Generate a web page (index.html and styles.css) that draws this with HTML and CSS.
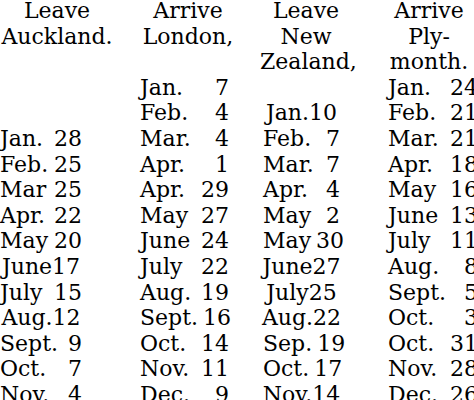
FILE: index.html
```html
<!DOCTYPE html>
<html lang="en">
<head>
<meta charset="utf-8">
<title>Mail timetable</title>
<link rel="stylesheet" href="styles.css">
</head>
<body>
<div class="sheet">
  <div class="h h1">Leave<br>Auckland.</div>
  <div class="h h2">Arrive<br>London,</div>
  <div class="h h3">Leave<br>New<br>Zealand,</div>
  <div class="h h4">Arrive<br>Ply-<br>month.</div>

  <div class="d d1"></div>
  <div class="d d2"><span>Jan.</span><span>7</span></div>
  <div class="d d3"></div>
  <div class="d d4"><span>Jan.</span><span>24</span></div>

  <div class="d d1"></div>
  <div class="d d2"><span>Feb.</span><span>4</span></div>
  <div class="d d3 tight"><span>Jan.</span><span>10</span></div>
  <div class="d d4"><span>Feb.</span><span>21</span></div>

  <div class="d d1"><span>Jan.</span><span>28</span></div>
  <div class="d d2"><span>Mar.</span><span>4</span></div>
  <div class="d d3"><span>Feb.</span><span>7</span></div>
  <div class="d d4"><span>Mar.</span><span>21</span></div>

  <div class="d d1"><span>Feb.</span><span>25</span></div>
  <div class="d d2"><span>Apr.</span><span>1</span></div>
  <div class="d d3"><span>Mar.</span><span>7</span></div>
  <div class="d d4"><span>Apr.</span><span>18</span></div>

  <div class="d d1"><span>Mar</span><span>25</span></div>
  <div class="d d2"><span>Apr.</span><span>29</span></div>
  <div class="d d3"><span>Apr.</span><span>4</span></div>
  <div class="d d4"><span>May</span><span>16</span></div>

  <div class="d d1"><span>Apr.</span><span>22</span></div>
  <div class="d d2"><span>May</span><span>27</span></div>
  <div class="d d3"><span>May</span><span>2</span></div>
  <div class="d d4"><span>June</span><span>13</span></div>

  <div class="d d1"><span>May</span><span>20</span></div>
  <div class="d d2"><span>June</span><span>24</span></div>
  <div class="d d3"><span>May</span><span>30</span></div>
  <div class="d d4"><span>July</span><span>11</span></div>

  <div class="d d1 tight"><span>June</span><span>17</span></div>
  <div class="d d2"><span>July</span><span>22</span></div>
  <div class="d d3 tight"><span>June</span><span>27</span></div>
  <div class="d d4"><span>Aug.</span><span>8</span></div>

  <div class="d d1"><span>July</span><span>15</span></div>
  <div class="d d2"><span>Aug.</span><span>19</span></div>
  <div class="d d3 tight"><span>July</span><span>25</span></div>
  <div class="d d4"><span>Sept.</span><span>5</span></div>

  <div class="d d1 tight"><span>Aug.</span><span>12</span></div>
  <div class="d d2"><span>Sept.</span><span>16</span></div>
  <div class="d d3 tight"><span>Aug.</span><span>22</span></div>
  <div class="d d4"><span>Oct.</span><span>3</span></div>

  <div class="d d1"><span>Sept.</span><span>9</span></div>
  <div class="d d2"><span>Oct.</span><span>14</span></div>
  <div class="d d3"><span>Sep.</span><span>19</span></div>
  <div class="d d4"><span>Oct.</span><span>31</span></div>

  <div class="d d1"><span>Oct.</span><span>7</span></div>
  <div class="d d2"><span>Nov.</span><span>11</span></div>
  <div class="d d3"><span>Oct.</span><span>17</span></div>
  <div class="d d4"><span>Nov.</span><span>28</span></div>

  <div class="d d1"><span>Nov.</span><span>4</span></div>
  <div class="d d2"><span>Dec.</span><span>9</span></div>
  <div class="d d3 tight"><span>Nov.</span><span>14</span></div>
  <div class="d d4"><span>Dec.</span><span>26</span></div>
</div>
</body>
</html>
```

FILE: styles.css
```css
html, body {
  margin: 0;
  padding: 0;
  background: #ffffff;
  overflow: hidden;
  width: 474px;
  height: 400px;
}

.sheet {
  display: grid;
  grid-template-columns: 134px 126px 124px 100px;
  margin-top: -2px;
  font-family: "DejaVu Serif", "Liberation Serif", serif;
  font-size: 22px;
  line-height: 25.6px;
  color: #000000;
  white-space: nowrap;
}

.h {
  text-align: center;
}

.h1 { padding-right: 20px; }
.h2 { padding-right: 18px; }
.h3 { padding-right: 32px; }
.h4 { padding-right: 10px; }

.d {
  display: flex;
  justify-content: space-between;
  gap: 5px;
  min-height: 25.6px;
}

.d.tight {
  justify-content: center;
  gap: 0;
}

.d1 { width: 82px; }
.d2 { margin-left: 6px; width: 89px; }
.d3 { margin-left: 3px; width: 77px; }
.d4 { margin-left: 4px; width: 90px; }
```
